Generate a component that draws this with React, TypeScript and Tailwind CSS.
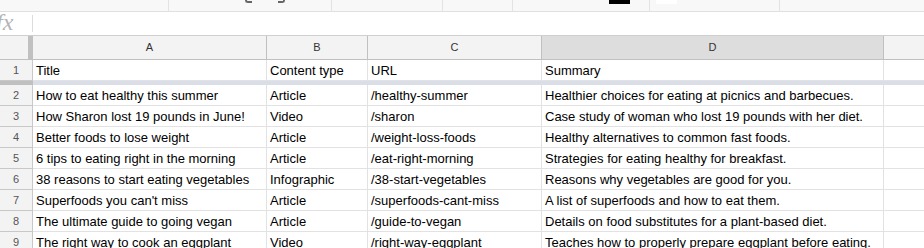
import React from 'react';

const columns = [
    {key: 'A', width: 'w-[234px]'},
    {key: 'B', width: 'w-[101px]'},
    {key: 'C', width: 'w-[174px]'},
    {key: 'D', width: 'w-[342px]'},
];

const header = ['Title', 'Content type', 'URL', 'Summary'];

const rows = [
    ['How to eat healthy this summer', 'Article', '/healthy-summer', 'Healthier choices for eating at picnics and barbecues.'],
    ['How Sharon lost 19 pounds in June!', 'Video', '/sharon', 'Case study of woman who lost 19 pounds with her diet.'],
    ['Better foods to lose weight', 'Article', '/weight-loss-foods', 'Healthy alternatives to common fast foods.'],
    ['6 tips to eating right in the morning', 'Article', '/eat-right-morning', 'Strategies for eating healthy for breakfast.'],
    ['38 reasons to start eating vegetables', 'Infographic', '/38-start-vegetables', 'Reasons why vegetables are good for you.'],
    ['Superfoods you can\'t miss', 'Article', '/superfoods-cant-miss', 'A list of superfoods and how to eat them.'],
    ['The ultimate guide to going vegan', 'Article', '/guide-to-vegan', 'Details on food substitutes for a plant-based diet.'],
    ['The right way to cook an eggplant', 'Video', '/right-way-eggplant', 'Teaches how to properly prepare eggplant before eating.'],
];

const Row = ({num, cells}: {num: number, cells: string[]}) => (
    <div className="flex h-[21px] shrink-0">
        <div className="w-[33px] shrink-0 flex items-center justify-center pt-px bg-[#f3f3f3] border-r border-b border-[#c8c8c8] text-[11px] text-[#555]">
            {num}
        </div>
        {columns.map((col, i) => (
            <div key={col.key} className={`${col.width} shrink-0 flex items-center pl-[3px] pt-px border-r border-b border-[#e2e2e2] overflow-hidden whitespace-nowrap text-[13px] text-black`}>
                {cells[i]}
            </div>
        ))}
        <div className="flex-1 border-b border-[#e2e2e2]" />
    </div>
);

export default function App() {
    return (
        <div className="w-[924px] h-[248px] overflow-hidden bg-white flex flex-col" style={{fontFamily: '"Liberation Sans", Arial, sans-serif'}}>
            {/* toolbar, mostly scrolled out of view */}
            <div className="h-[12px] shrink-0 flex bg-[#f8f8f8] border-b border-[#e0e0e0]">
                <div className="w-[169px] border-r border-[#e3e3e3]" />
                <div className="w-[163px] border-r border-[#e3e3e3] flex items-start pl-[76px] gap-[26px]">
                    <div className="w-[7px] h-[3px] border-b-2 border-l-2 border-[#666] rounded-bl-[3px]" />
                    <div className="w-[7px] h-[3px] border-b-2 border-r-2 border-[#666] rounded-br-[3px]" />
                </div>
                <div className="w-[111px] border-r border-[#e3e3e3]" />
                <div className="w-[70px] border-r border-[#e3e3e3]" />
                <div className="w-[137px] border-r border-[#e3e3e3] flex items-start pl-[96px]">
                    <div className="w-[21px] h-[4px] bg-black" />
                </div>
                <div className="w-[130px] border-r border-[#e3e3e3] flex items-start pl-[6px]">
                    <div className="w-[21px] h-[4px] bg-white" />
                </div>
                <div className="flex-1" />
            </div>

            {/* formula bar */}
            <div className="h-[24px] shrink-0 flex items-center border-b border-[#cfcfcf]">
                <div className="w-[32px] flex items-center">
                    <span className="italic text-[24px] leading-none text-[#b4b4b4] -ml-[4px] -mt-[3px]" style={{fontFamily: '"Liberation Serif", "DejaVu Serif", serif'}}>fx</span>
                </div>
                <div className="w-px h-[17px] bg-[#dcdcdc]" />
            </div>

            {/* column headers */}
            <div className="h-[24px] shrink-0 flex bg-[#f3f3f3] border-b border-[#c0c0c0]">
                <div className="w-[28px] shrink-0" />
                <div className="w-[5px] shrink-0 bg-[#c0c0c0]" />
                {columns.map(col => (
                    <div key={col.key} className={`${col.width} shrink-0 flex items-center justify-center border-r border-[#c0c0c0] text-[11px] text-[#333] ${col.key === 'D' ? 'bg-[#dddddd]' : ''}`}>
                        {col.key}
                    </div>
                ))}
                <div className="flex-1" />
            </div>

            <Row num={1} cells={header} />

            {/* frozen row divider */}
            <div className="h-[4px] shrink-0 flex">
                <div className="w-[33px] bg-[#c0c0c0]" />
                <div className="flex-1 bg-[#dadee8]" />
            </div>

            {rows.map((r, i) => (
                <Row key={i} num={i + 2} cells={r} />
            ))}
        </div>
    );
}
